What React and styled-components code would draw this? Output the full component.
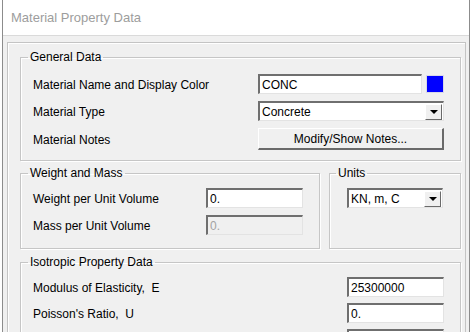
import React from "react";
import styled, { createGlobalStyle } from "styled-components";

const GlobalStyle = createGlobalStyle`
body {
  margin: 0;
  background: #ffffff;
  font-family: "Liberation Sans", Arial, sans-serif;
  font-size: 12px;
  color: #000;
}
`;

const Window = styled.div`
  margin-left: 2px;
  width: 466px;
  height: 332px;
  border-left: 1px solid #8c8c8c;
  border-right: 1px solid #8c8c8c;
  background: #f0f0f0;
  overflow: hidden;
`;

const TitleBar = styled.div`
  height: 35px;
  background: #ffffff;
  border-bottom: 1px solid #dadada;
  display: flex;
  align-items: center;
  padding-left: 8px;
  font-size: 13px;
  color: #9d9d9d;
`;

const Frame = styled.div`
  margin: 6px 3px 0 4px;
  border: 1px solid #c4c4c4;
  border-bottom: none;
  box-shadow: inset 1px 1px 0 #ffffff;
  padding: 7px 4px 0 12px;
  display: flex;
  flex-direction: column;
`;

const Group = styled.fieldset`
  margin: 0;
  margin-top: ${(p) => p.$mt || 0}px;
  padding: ${(p) => p.$pad || "0 16px 10px 12px"};
  border: 1px solid #c6c6c6;
  box-shadow: inset 1px 1px 0 #ffffff, 1px 1px 0 #ffffff;
  min-width: 0;
  width: ${(p) => p.$width || "auto"};
  box-sizing: border-box;
  flex: ${(p) => (p.$grow ? 1 : "none")};
`;

const Legend = styled.legend`
  margin-left: ${(p) => p.$ml ?? -5}px;
  padding: 0 2px;
  line-height: 14px;
  font-size: 12px;
`;

const Rows = styled.div`
  display: flex;
  flex-direction: column;
  gap: ${(p) => p.$gap || 7}px;
  padding-top: ${(p) => p.$pt || 8}px;
`;

const Row = styled.div`
  display: flex;
  align-items: center;
  justify-content: space-between;
  height: ${(p) => p.$h || 20}px;
`;

const Label = styled.span`
  white-space: nowrap;
  padding-top: 2px;
`;

const Controls = styled.div`
  display: flex;
  align-items: center;
  gap: 4px;
`;

const Field = styled.div`
  box-sizing: border-box;
  width: ${(p) => p.$w}px;
  height: 20px;
  border-style: solid;
  border-width: 2px 1px 1px 2px;
  border-color: #6f6f6f #e3e3e3 #e3e3e3 #6f6f6f;
  background: ${(p) => (p.$disabled ? "#f0f0f0" : "#ffffff")};
  color: ${(p) => (p.$disabled ? "#a3a3a3" : "#000")};
  padding-left: 2px;
  display: flex;
  align-items: center;
  justify-content: space-between;
  font-size: 12px;
`;

const Swatch = styled.div`
  width: 18px;
  height: 18px;
  background: #0000ff;
  border: 1px solid #d8d8e8;
  box-sizing: border-box;
`;

const ArrowBox = styled.div`
  width: 17px;
  height: 16px;
  box-sizing: border-box;
  margin-right: 1px;
  background: #f0f0f0;
  border-style: solid;
  border-width: 1px;
  border-color: #ffffff #6a6a6a #6a6a6a #ffffff;
  display: flex;
  align-items: center;
  justify-content: center;
`;

const Arrow = styled.div`
  width: 0;
  height: 0;
  border-left: 4px solid transparent;
  border-right: 4px solid transparent;
  border-top: 4px solid #000;
`;

const Button = styled.div`
  box-sizing: border-box;
  width: 186px;
  height: 22px;
  background: #f0f0f0;
  border-style: solid;
  border-width: 1px 2px 2px 1px;
  border-color: #ffffff #6a6a6a #6a6a6a #ffffff;
  display: flex;
  align-items: center;
  justify-content: center;
`;

const Split = styled.div`
  display: flex;
  gap: 9px;
  margin-top: 5px;
`;

const Select = ({ w, value }) => (
  <Field $w={w}>
    {value}
    <ArrowBox>
      <Arrow />
    </ArrowBox>
  </Field>
);

const App = () => (
  <>
    <GlobalStyle />
    <Window>
      <TitleBar>Material Property Data</TitleBar>
      <Frame>
        <Group>
          <Legend>General Data</Legend>
          <Rows $pt={10}>
            <Row>
              <Label>Material Name and Display Color</Label>
              <Controls>
                <Field $w={164}>CONC</Field>
                <Swatch />
              </Controls>
            </Row>
            <Row>
              <Label>Material Type</Label>
              <Select w={186} value="Concrete" />
            </Row>
            <Row $h={22}>
              <Label>Material Notes</Label>
              <Button>Modify/Show Notes...</Button>
            </Row>
          </Rows>
        </Group>
        <Split>
          <Group $width="300px" $pad="0 16px 13px 12px">
            <Legend>Weight and Mass</Legend>
            <Rows>
              <Row>
                <Label>Weight per Unit Volume</Label>
                <Field $w={97}>0.</Field>
              </Row>
              <Row>
                <Label>Mass per Unit Volume</Label>
                <Field $w={97} $disabled>
                  0.
                </Field>
              </Row>
            </Rows>
          </Group>
          <Group $grow $pad="0 17px 13px 17px">
            <Legend $ml={-11}>Units</Legend>
            <Rows>
              <Row>
                <Select w={97} value="KN, m, C" />
              </Row>
            </Rows>
          </Group>
        </Split>
        <Group $mt={6}>
          <Legend>Isotropic Property Data</Legend>
          <Rows $gap={6}>
            <Row>
              <Label>Modulus of Elasticity,&nbsp; E</Label>
              <Field $w={97}>25300000</Field>
            </Row>
            <Row>
              <Label>Poisson's Ratio,&nbsp; U</Label>
              <Field $w={97}>0.</Field>
            </Row>
            <Row>
              <Label />
              <Field $w={97} />
            </Row>
          </Rows>
        </Group>
      </Frame>
    </Window>
  </>
);

export default App;
